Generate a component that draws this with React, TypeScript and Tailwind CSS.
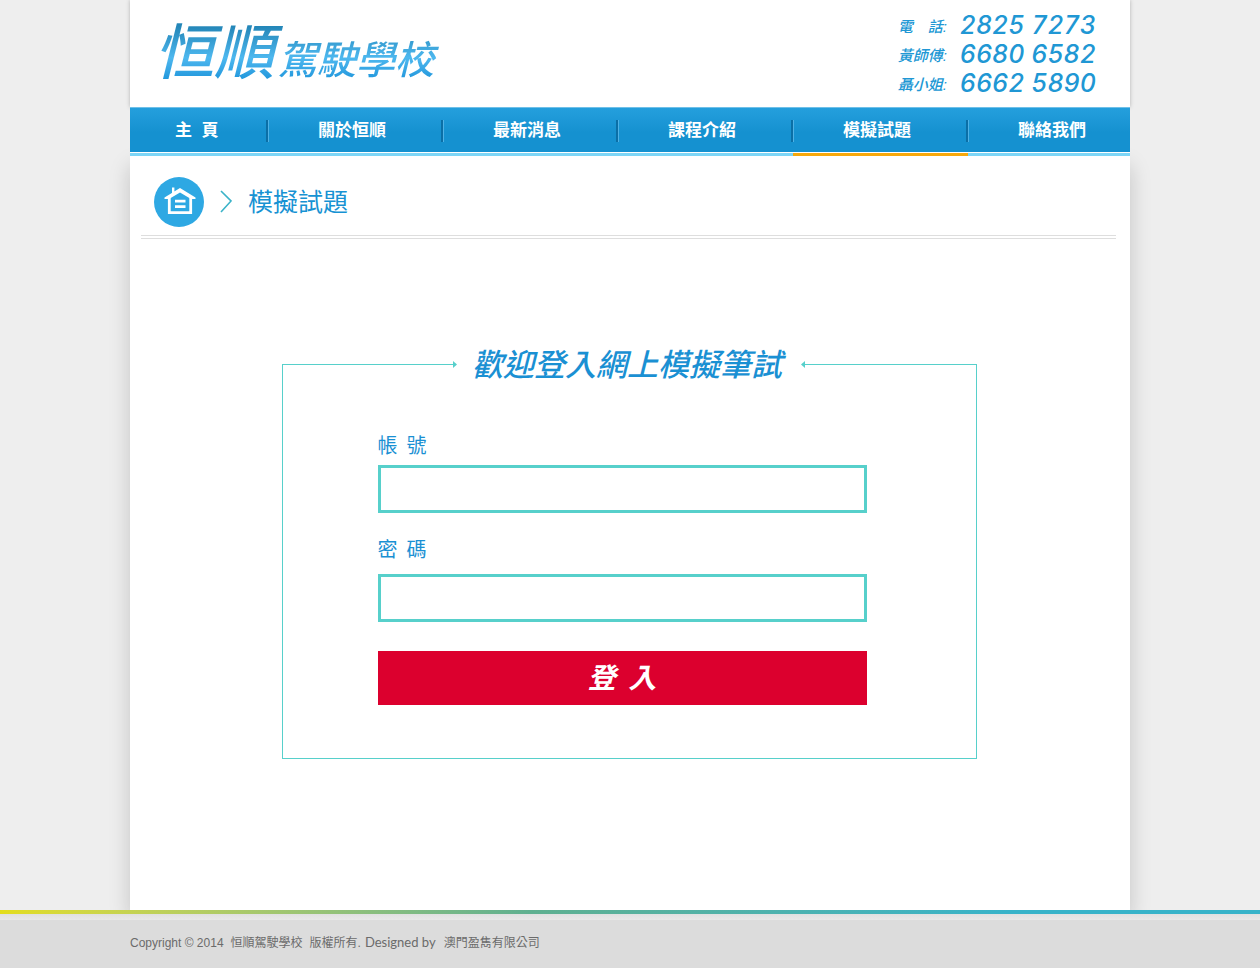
import React from "react";

const navItems = [
  { label: "主  頁", href: "#home" },
  { label: "關於恒順", href: "#about" },
  { label: "最新消息", href: "#news" },
  { label: "課程介紹", href: "#courses" },
  { label: "模擬試題", href: "#exam", active: true },
  { label: "聯絡我們", href: "#contact" },
];

const phones = [
  { name: "電　話:", number: "2825 7273" },
  { name: "黃師傅:", number: "6680 6582" },
  { name: "聶小姐:", number: "6662 5890" },
];

const Header = () => {
  return (
    <header className="flex h-[107px] items-start justify-between bg-white pr-[34px] pl-6 shadow-[0_0_4px_rgba(0,0,0,0.25)]">
      <a
        href="#home"
        className="flex items-baseline gap-1 bg-linear-to-b from-[#2386b8] from-25% via-[#4db8ef] via-55% to-[#1090d8] to-80% bg-clip-text pt-[10px] pr-3 italic text-transparent"
      >
        <span className="text-[60px] leading-[88px] font-medium">恒順</span>
        <span className="text-[39px] leading-[88px] font-medium">駕駛學校</span>
      </a>
      <ul className="pt-[10px] italic text-[#2097d4]">
        {phones.map((phone) => (
          <li key={phone.number} className="flex h-[29px] items-center">
            <span className="w-[62px] pt-1.5 text-[15px] font-medium">
              {phone.name}
            </span>
            <span className="font-['Inter','Liberation_Sans',sans-serif] text-[25px] leading-7 font-medium tabular-nums">
              {phone.number}
            </span>
          </li>
        ))}
      </ul>
    </header>
  );
};

const Nav = () => {
  return (
    <nav className="relative border-t border-[#6fc0e8] bg-white">
      <ul className="grid grid-cols-[138px_repeat(4,minmax(0,175px))_1fr]">
        {navItems.map((item, i) => (
          <li key={item.href} className="group">
            <a
              href={item.href}
              className="relative flex h-11 items-center bg-linear-to-b from-[#249fdd] to-[#1591d0] to-55% pt-0.5 pl-[50px] text-[17px] font-bold whitespace-pre text-white group-first:pl-[45px]"
            >
              {item.label}
              {i < navItems.length - 1 && (
                <span className="absolute top-3 -right-px z-10 h-[22px] w-[3px] border-r border-[#4fb2e6] bg-[#0b6fa6]" />
              )}
            </a>
            <div
              className={
                item.active
                  ? "mt-px h-[3px] bg-[#f7a80b]"
                  : "mt-px h-[3px] bg-[#7dd6f7]"
              }
            />
          </li>
        ))}
      </ul>
    </nav>
  );
};

const Breadcrumb = () => {
  return (
    <div className="flex items-center pt-[21px] pl-6">
      <a href="#home" aria-label="主頁">
        <svg width="50" height="50" viewBox="0 0 50 50" fill="none">
          <circle cx="25" cy="25" r="25" fill="#2ea8e3" />
          <path
            d="M10.5 20.5 26 11 41.5 20.5V22H37L26 15.4 15 22H10.5zM18 10.5h2.4v5.5L18 17.5z"
            fill="#fff"
          />
          <path
            d="M15.3 20v15.7h21.4V20M21 24.2h10.5M21 29.7h10.5"
            stroke="#fff"
            strokeWidth="2.8"
          />
        </svg>
      </a>
      <svg className="ml-4" width="12" height="24" viewBox="0 0 12 24" fill="none">
        <path d="M1 1 11 11 1 22" stroke="#3bb3c8" strokeWidth="1.6" />
      </svg>
      <h1 className="ml-4 text-[25px] leading-[48px] text-[#1792d3]">模擬試題</h1>
    </div>
  );
};

const LoginForm = () => {
  return (
    <form
      onSubmit={(e) => e.preventDefault()}
      className="mx-auto w-full max-w-[695px]"
    >
      <div className="flex h-8 items-end">
        <div className="relative h-4 flex-1 border-t border-l border-[#57d0cb]">
          <svg className="absolute -top-1 -right-px" width="4" height="7" viewBox="0 0 4 7">
            <path d="M0 0 4 3.5 0 7z" fill="#57d0cb" />
          </svg>
        </div>
        <h2 className="pr-5 pl-4 text-[31px] leading-7 font-medium text-[#1a90d3] italic">
          歡迎登入網上模擬筆試
        </h2>
        <div className="relative h-4 flex-1 border-t border-r border-[#57d0cb]">
          <svg className="absolute -top-1 -left-px" width="4" height="7" viewBox="0 0 4 7">
            <path d="M4 0 0 3.5 4 7z" fill="#57d0cb" />
          </svg>
        </div>
      </div>
      <div className="flex flex-col border border-t-0 border-[#57d0cb] pt-[50px] pr-[109px] pb-[53px] pl-[95px]">
        <label
          htmlFor="account"
          className="font-['Noto_Sans_CJK_TC',sans-serif] text-xl leading-[30px] whitespace-pre text-[#1a90d3]"
        >
          帳  號
        </label>
        <input
          id="account"
          type="text"
          className="mt-[5px] h-12 border-[3px] border-[#57d0cb] bg-white px-3 text-xl outline-none"
        />
        <label
          htmlFor="password"
          className="mt-[21px] font-['Noto_Sans_CJK_TC',sans-serif] text-xl leading-[30px] whitespace-pre text-[#1a90d3]"
        >
          密  碼
        </label>
        <input
          id="password"
          type="password"
          className="mt-[10px] h-12 border-[3px] border-[#57d0cb] bg-white px-3 text-xl outline-none"
        />
        <button
          type="submit"
          className="mt-[29px] h-[54px] bg-[#dc002e] pb-1 font-['Noto_Sans_CJK_TC',sans-serif] text-[28px] leading-none font-bold whitespace-pre text-white italic"
        >
          登  入
        </button>
      </div>
    </form>
  );
};

const Footer = () => {
  return (
    <footer className="relative bg-[#dcdcdc]">
      <div className="h-1 bg-linear-to-r from-[#e3dd1a] via-[#5fb090] via-42% to-[#38b3c9] to-80%" />
      <div className="h-1.5 bg-linear-to-b from-[#e0e0e0] to-[#e8e8e8]" />
      <div className="mx-auto flex h-12 w-full max-w-[1000px] items-center pb-[3px] text-xs whitespace-pre text-[#6b6b6b]">
        <span>Copyright © 2014</span>
        <span className="ml-[7px]">恒順駕駛學校</span>
        <span className="ml-[7px]">版權所有.</span>
        <span className="ml-1 font-['Lato',sans-serif] text-[13px]">Designed by</span>
        <span className="ml-2">澳門盈雋有限公司</span>
      </div>
    </footer>
  );
};

const App = () => {
  return (
    <div className="bg-[#eeeeee] font-['Liberation_Sans','Noto_Sans_CJK_TC',sans-serif]">
      <div className="mx-auto w-full max-w-[1000px]">
        <Header />
        <Nav />
        <main className="bg-white pb-[151px] shadow-[0_10px_20px_rgba(0,0,0,0.18)]">
          <Breadcrumb />
          <hr className="mt-2 mr-[14px] ml-[11px] h-1 border-y border-[#dedede]" />
          <div className="pt-[109px] pr-0.5">
            <LoginForm />
          </div>
        </main>
      </div>
      <Footer />
    </div>
  );
};

export default App;
